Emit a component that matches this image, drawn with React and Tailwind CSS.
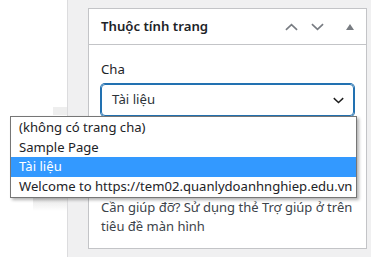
import React from "react";

const options = [
  "(không có trang cha)",
  "Sample Page",
  "Tài liệu",
  "Welcome to https://tem02.quanlydoanhnghiep.edu.vn",
];

const Chevron = ({ up, className }) => (
  <svg viewBox="0 0 14 8" className={className} fill="none" stroke="currentColor" strokeWidth="1.8">
    <path d={up ? "M1 7l6-5.5L13 7" : "M1 1l6 5.5L13 1"} />
  </svg>
);

const App = () => {
  const selected = "Tài liệu";

  return (
    <div className="relative flex w-[371px] h-[257px] overflow-hidden bg-[#f0f0f1] font-['Noto_Sans',sans-serif]">
      <div className="flex flex-col w-[68px] flex-none bg-white border-r border-[#dcdcde]">
        <div className="h-[107px]" />
        <div className="flex h-[8px]">
          <div className="w-[53px] bg-white" />
          <div className="flex-1 bg-[#eeeeee]" />
        </div>
        <div className="flex-1" />
        <div className="flex h-[14px] mb-[46px]">
          <div className="w-[33px] bg-white" />
          <div className="flex-1 bg-gradient-to-b from-[#e4e4e4] to-white" />
        </div>
      </div>
      <div className="w-[20px] flex-none" />

      <div className="flex flex-col mt-[8px] w-[279px] h-[241px] flex-none bg-white border border-[#c3c4c7]">
        <div className="flex items-center h-[36px] flex-none pl-[12px] pr-[12px] border-b border-[#c3c4c7]">
          <h2 className="text-[13.2px] font-semibold text-[#1d2327] leading-none">Thuộc tính trang</h2>
          <div className="flex items-center ml-auto text-[#787c82]">
            <Chevron up className="w-[13px] h-[8px]" />
            <Chevron className="w-[13px] h-[8px] ml-[13px]" />
            <svg viewBox="0 0 8 6" className="w-[8px] h-[6px] ml-[22px]" fill="currentColor">
              <path d="M4 0L8 6H0z" />
            </svg>
          </div>
        </div>

        <div className="flex flex-col flex-1 px-[12px]">
          <p className="mt-[15px] text-[13.2px] leading-[18px] text-[#1d2327]">Cha</p>
          <div className="flex items-center mt-[6px] h-[32px] pl-[10px] pr-[9px] rounded-[4px] border border-[#2271b1] shadow-[0_0_0_1px_#2271b1] text-[13.2px] text-[#2c3338]">
            <span>{selected}</span>
            <Chevron className="w-[11px] h-[7px] ml-auto text-[#1e1e1e]" />
          </div>
          <p className="mt-[82px] text-[13px] leading-[19px] text-[#3c434a]">
            Cần giúp đỡ? Sử dụng thẻ Trợ giúp ở trên tiêu đề màn hình
          </p>
        </div>
      </div>

      <ul className="absolute left-[10px] top-[116px] w-[347px] py-[1px] bg-white border border-[#767676] shadow-[2px_2px_3px_rgba(0,0,0,0.3)] text-[13.1px] text-[#1d2327]">
        {options.map((opt) => (
          <li
            key={opt}
            className={
              opt === selected
                ? "h-[19.5px] leading-[19.5px] pl-[8px] whitespace-nowrap bg-[#3399ff] text-white"
                : "h-[19.5px] leading-[19.5px] pl-[8px] whitespace-nowrap"
            }
          >
            {opt}
          </li>
        ))}
      </ul>
    </div>
  );
};

export default App;
